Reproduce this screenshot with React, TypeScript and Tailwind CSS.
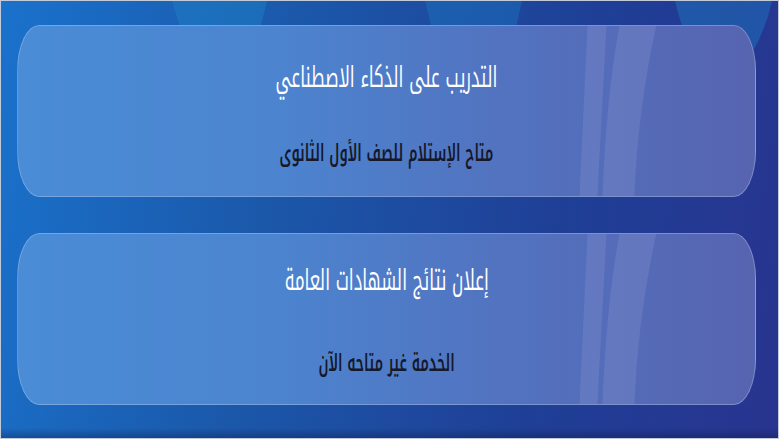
import React from "react";

function Card({ title, sub, titleTop, subGap }: { title: string; sub: string; titleTop: string; subGap: string }) {
  return (
    <div className="relative h-[172px] w-full overflow-hidden rounded-[22px/46px] border border-[rgba(200,215,245,0.35)] bg-[linear-gradient(90deg,#4a8cd6_0%,#4c84cf_35%,#5273c0_65%,#5764b0_100%)]">
      <svg className="absolute inset-0 h-full w-full" viewBox="0 0 739 172" preserveAspectRatio="none">
        <path d="M571 0 L590 0 L581 172 L563 172 Z" fill="rgba(140,150,210,0.28)" />
        <path d="M603 0 L640 0 Q622 80 618 172 L586 172 Q590 70 603 0 Z" fill="rgba(140,150,210,0.28)" />
      </svg>
      <div className={`relative flex flex-col items-center ${titleTop}`} dir="rtl">
        <div className="scale-x-[0.58] whitespace-nowrap text-[29px] leading-[36px] font-normal text-white font-['Noto_Kufi_Arabic',sans-serif]">{title}</div>
        <div className={`${subGap} scale-x-[0.57] whitespace-nowrap text-[24px] leading-[30px] font-semibold text-[#15182a] font-['Noto_Kufi_Arabic',sans-serif]`}>{sub}</div>
      </div>
    </div>
  );
}

export default function App() {
  return (
    <div className="relative h-[439px] w-[779px] overflow-hidden border border-[#c3cad8] bg-[linear-gradient(100deg,#1a72cc_0%,#1b58aa_35%,#1f3f96_70%,#28348f_100%)]">
      <svg className="absolute inset-0 h-full w-full" viewBox="0 0 777 437">
        <path d="M171 0 L266 0 L256 40 L183 40 Z" fill="rgba(30,130,200,0.45)" />
        <path d="M424 0 L521 0 L512 40 L434 40 Z" fill="rgba(30,130,200,0.35)" />
        <path d="M674 0 L771 0 Q766 25 752 50 L690 50 Q680 25 674 0 Z" fill="rgba(30,130,200,0.4)" />
      </svg>
      <div className="absolute inset-x-0 bottom-0 h-[10px] bg-[linear-gradient(180deg,rgba(0,0,0,0)_0%,rgba(10,20,70,0.35)_100%)]" />
      <div className="relative flex flex-col gap-[36px] pl-[16px] pr-[22px] pt-[24px]">
        <Card title="التدريب على الذكاء الاصطناعي" sub="متاح الإستلام للصف الأول الثانوى" titleTop="pt-[34px]" subGap="mt-[42px]" />
        <Card title="إعلان نتائج الشهادات العامة" sub="الخدمة غير متاحه الآن" titleTop="pt-[29px]" subGap="mt-[49px]" />
      </div>
    </div>
  );
}
